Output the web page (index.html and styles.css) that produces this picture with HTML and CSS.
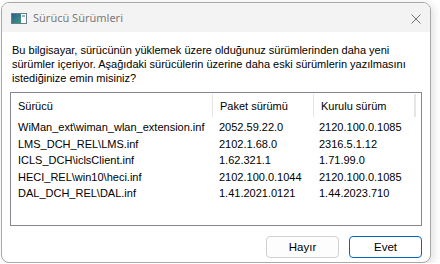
FILE: index.html
```html
<!DOCTYPE html>
<html lang="tr">
<head>
    <meta charset="UTF-8">
    <title>Sürücü Sürümleri</title>
    <link rel="stylesheet" href="styles.css">
</head>
<body>
    <div class="ventana">
        <div class="titulo">
            <svg class="icono" width="16" height="11" viewBox="0 0 16 11">
                <defs>
                    <linearGradient id="g" x1="0" y1="0" x2="1" y2="1">
                        <stop offset="0" stop-color="#2a5f8f"/>
                        <stop offset="1" stop-color="#3f9a7a"/>
                    </linearGradient>
                </defs>
                <rect x="0.5" y="0.5" width="15" height="10" fill="#fff" stroke="#6a7d8c"/>
                <rect x="1" y="1" width="9" height="9" fill="url(#g)"/>
                <rect x="11" y="2" width="3" height="2" fill="#9bb0c4"/>
            </svg>
            <span class="nombre">Sürücü Sürümleri</span>
            <svg class="cerrar" width="10" height="10" viewBox="0 0 10 10">
                <path d="M0.5 0.5 L9.5 9.5 M9.5 0.5 L0.5 9.5" stroke="#707070" stroke-width="1"/>
            </svg>
        </div>
        <div class="cuerpo">
            <p class="mensaje">Bu bilgisayar, sürücünün yüklemek üzere olduğunuz sürümlerinden daha yeni<br>sürümler içeriyor. Aşağıdaki sürücülerin üzerine daha eski sürümlerin yazılmasını<br>istediğinize emin misiniz?</p>
            <div class="lista">
                <div class="fila encabezado">
                    <span class="col1">Sürücü</span>
                    <span class="col2">Paket sürümü</span>
                    <span class="col3">Kurulu sürüm</span>
                    <span class="col4"></span>
                </div>
                <div class="fila">
                    <span class="col1">WiMan_ext\wiman_wlan_extension.inf</span>
                    <span class="col2">2052.59.22.0</span>
                    <span class="col3">2120.100.0.1085</span>
                </div>
                <div class="fila">
                    <span class="col1">LMS_DCH_REL\LMS.inf</span>
                    <span class="col2">2102.1.68.0</span>
                    <span class="col3">2316.5.1.12</span>
                </div>
                <div class="fila">
                    <span class="col1">ICLS_DCH\iclsClient.inf</span>
                    <span class="col2">1.62.321.1</span>
                    <span class="col3">1.71.99.0</span>
                </div>
                <div class="fila">
                    <span class="col1">HECI_REL\win10\heci.inf</span>
                    <span class="col2">2102.100.0.1044</span>
                    <span class="col3">2120.100.0.1085</span>
                </div>
                <div class="fila">
                    <span class="col1">DAL_DCH_REL\DAL.inf</span>
                    <span class="col2">1.41.2021.0121</span>
                    <span class="col3">1.44.2023.710</span>
                </div>
            </div>
            <div class="botones">
                <button class="boton">Hayır</button>
                <button class="boton principal">Evet</button>
            </div>
        </div>
    </div>
</body>
</html>
```

FILE: styles.css
```css
body {
    margin: 0;
    background-color: #fff;
    font-family: "Liberation Sans", Arial, sans-serif;
    font-size: 11px;
    color: #000;
}
.ventana {
    margin: 2px 0 0 1px;
    width: 428px;
    height: 259px;
    border: 1px solid #a8a8a8;
    border-radius: 8px;
    overflow: hidden;
    background-color: #fff;
    box-shadow: 3px 2px 8px rgba(0, 0, 0, 0.12);
}
.titulo {
    display: flex;
    align-items: center;
    height: 29px;
    background-color: #f3f3f3;
    padding: 0 9px 0 9px;
}
.icono {
    margin-top: 1px;
}
.nombre {
    margin-left: 6px;
    font-family: "Noto Sans", sans-serif;
    font-size: 11px;
    color: #7a7a7a;
    flex: 1;
}
.cerrar {
    margin-top: 2px;
}
.cuerpo {
    padding: 0 8px;
}
.mensaje {
    margin: 11px 0 0 2px;
    line-height: 14px;
    white-space: nowrap;
}
.lista {
    margin-top: 7px;
    height: 132px;
    border: 1px solid #828790;
}
.fila {
    display: flex;
    height: 16.5px;
    line-height: 16.5px;
}
.fila span {
    padding-left: 7px;
    white-space: nowrap;
}
.col1 { width: 194px; }
.col2 { width: 93px; }
.col3 { width: 93px; }
.encabezado {
    height: 25px;
    line-height: 24px;
    margin-bottom: 1px;
}
.encabezado span {
    border-right: 1px solid #e5e5e5;
    height: 23px;
    margin-top: 1px;
}
.encabezado .col4 {
    width: 0;
    padding: 0;
}
.botones {
    display: flex;
    justify-content: flex-end;
    gap: 10px;
    margin-top: 10px;
}
.boton {
    width: 73px;
    height: 22px;
    font-family: "Liberation Sans", Arial, sans-serif;
    font-size: 11.5px;
    color: #000;
    background-color: #fdfdfd;
    border: 1px solid #d0d0d0;
    border-radius: 4px;
    padding: 0;
}
.principal {
    border-color: #0067c0;
    background-color: #fff;
}
```
